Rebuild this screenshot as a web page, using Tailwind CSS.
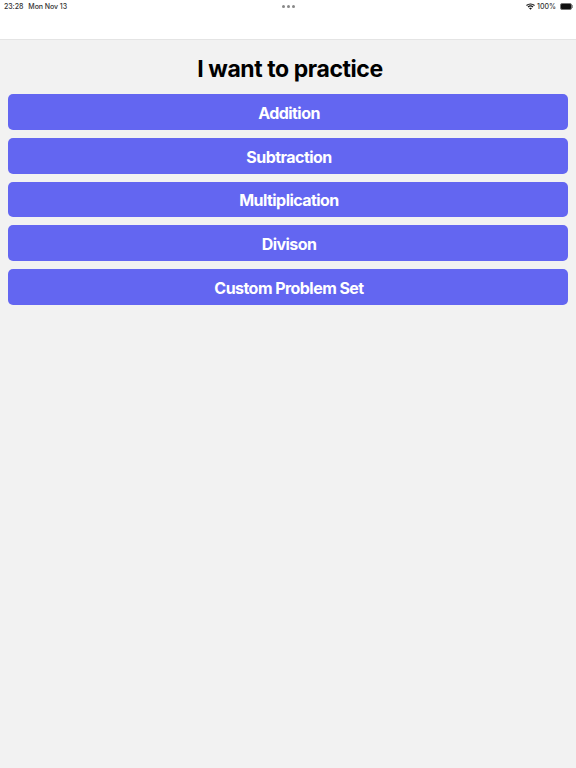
<!DOCTYPE html>
<html lang="en">
<head>
  <meta charset="UTF-8" />
  <meta name="viewport" content="width=device-width, initial-scale=1" />
  <title>Practice</title>
  <script src="https://cdn.jsdelivr.net/npm/@tailwindcss/browser@4"></script>
</head>
<body class="w-[576px] h-[768px] overflow-hidden bg-[#f2f2f2] font-['Inter',sans-serif]">

  <!-- Status bar + nav -->
  <header class="h-10 bg-white border-b border-[#e4e4e4]">
    <div class="h-[13px] flex items-center justify-between pl-1 pr-[3px] text-[7px] leading-[13px] text-[#333] font-medium">
      <div class="flex gap-[5px] w-[100px] tracking-[-0.05px]">
        <span>23:28</span>
        <span>Mon Nov 13</span>
      </div>
      <div class="flex gap-[2px] -mt-px">
        <span class="w-[3px] h-[3px] rounded-full bg-[#888]"></span>
        <span class="w-[3px] h-[3px] rounded-full bg-[#888]"></span>
        <span class="w-[3px] h-[3px] rounded-full bg-[#888]"></span>
      </div>
      <div class="flex items-center justify-end gap-[2px] w-[100px]">
        <svg width="9" height="7" viewBox="0 0 18 14" fill="none" stroke="#111" stroke-width="2.4">
          <path d="M1 5 C5.5 1 12.5 1 17 5" />
          <path d="M4 8 C7 5.5 11 5.5 14 8" />
          <path d="M9 13.5 L6.2 10.6 C7.8 9.4 10.2 9.4 11.8 10.6 Z" fill="#111" stroke="none" />
        </svg>
        <span>100%</span>
        <div class="flex items-center ml-[2px]">
          <div class="w-[12px] h-[7px] rounded-[2px] bg-[#111] border border-[#777]"></div>
          <div class="w-[1px] h-[3px] bg-[#999]"></div>
        </div>
      </div>
    </div>
  </header>

  <main class="px-2">
    <h1 class="h-[54px] pt-1 flex items-center justify-center text-[23px] tracking-[-0.42px] font-bold text-black pl-1">I want to practice</h1>
    <div class="flex flex-col gap-2">
      <button class="h-[35.8px] rounded-[5px] bg-[#6366f1] pl-[2px] pt-[2px] text-white text-base tracking-[-0.55px] font-bold">Addition</button>
      <button class="h-[35.8px] rounded-[5px] bg-[#6366f1] pl-[2px] pt-[2px] text-white text-base tracking-[-0.55px] font-bold">Subtraction</button>
      <button class="h-[35.8px] rounded-[5px] bg-[#6366f1] pl-[2px] pt-[2px] text-white text-base tracking-[-0.55px] font-bold">Multiplication</button>
      <button class="h-[35.8px] rounded-[5px] bg-[#6366f1] pl-[2px] pt-[2px] text-white text-base tracking-[-0.55px] font-bold">Divison</button>
      <button class="h-[35.8px] rounded-[5px] bg-[#6366f1] pl-[2px] pt-[2px] text-white text-base tracking-[-0.55px] font-bold">Custom Problem Set</button>
    </div>
  </main>

</body>
</html>
